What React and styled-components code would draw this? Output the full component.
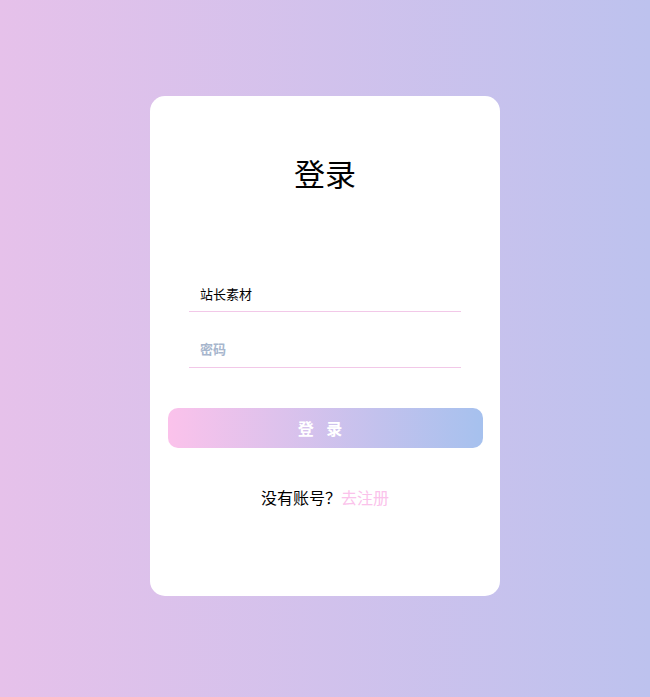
import React from "react";
import styled, { createGlobalStyle } from "styled-components";

const Global = createGlobalStyle`
  html, body { margin: 0; padding: 0; }
  body {
    font-family: "Liberation Sans", "Noto Sans CJK SC", sans-serif;
    min-height: 697px;
    background: linear-gradient(to right, #e6c1ea, #bdc2ee);
  }
`;

const Page = styled.div`
  display: flex;
  justify-content: center;
  padding-top: 96px;
  height: 697px;
  box-sizing: border-box;
`;

const Card = styled.div`
  width: 350px;
  height: 500px;
  background: #fff;
  border-radius: 15px;
  display: flex;
  flex-direction: column;
  align-items: center;
  box-sizing: border-box;
  padding-top: 57px;
`;

const Title = styled.h1`
  margin: 0;
  font-family: "Liberation Serif", "Noto Sans CJK SC", serif;
  font-weight: 400;
  font-size: 31px;
  line-height: 46px;
  color: #000;
  letter-spacing: 0;
`;

const Form = styled.div`
  margin-top: 77px;
  display: flex;
  flex-direction: column;
  align-items: center;
  gap: 20px;
  width: 100%;
`;

const Input = styled.input`
  width: 272px;
  height: 36px;
  box-sizing: border-box;
  border: none;
  border-bottom: 1px solid #f2c8e8;
  outline: none;
  padding: 0 11px;
  font-family: "Liberation Sans", "Noto Sans CJK SC", sans-serif;
  font-size: 13px;
  color: #000;
  background: transparent;
  &::placeholder {
    color: #a7b6cd;
    font-weight: 700;
  }
`;

const Button = styled.button`
  margin-top: 40px;
  width: 315px;
  height: 40px;
  border: none;
  border-radius: 10px;
  background: linear-gradient(to right, #fbc2eb, #a6c1ee);
  color: #fff;
  font-family: "Liberation Sans", "Noto Sans CJK SC", sans-serif;
  font-size: 16px;
  font-weight: 700;
  letter-spacing: 4px;
  padding: 0 6px 0 0;
  cursor: pointer;
`;

const Footer = styled.p`
  margin: 41px 0 0;
  font-size: 16px;
  line-height: 20px;
  color: #000;
  font-family: "Liberation Sans", "Noto Sans CJK SC", sans-serif;
`;

const Link = styled.a`
  color: #fbc2eb;
  text-decoration: none;
`;

export default function App() {
  return (
    <>
      <Global />
      <Page>
        <Card>
          <Title>登录</Title>
          <Form>
            <Input type="text" defaultValue="站长素材" />
            <Input type="password" placeholder="密码" />
          </Form>
          <Button>登 录</Button>
          <Footer>
            没有账号？<Link href="#">去注册</Link>
          </Footer>
        </Card>
      </Page>
    </>
  );
}
